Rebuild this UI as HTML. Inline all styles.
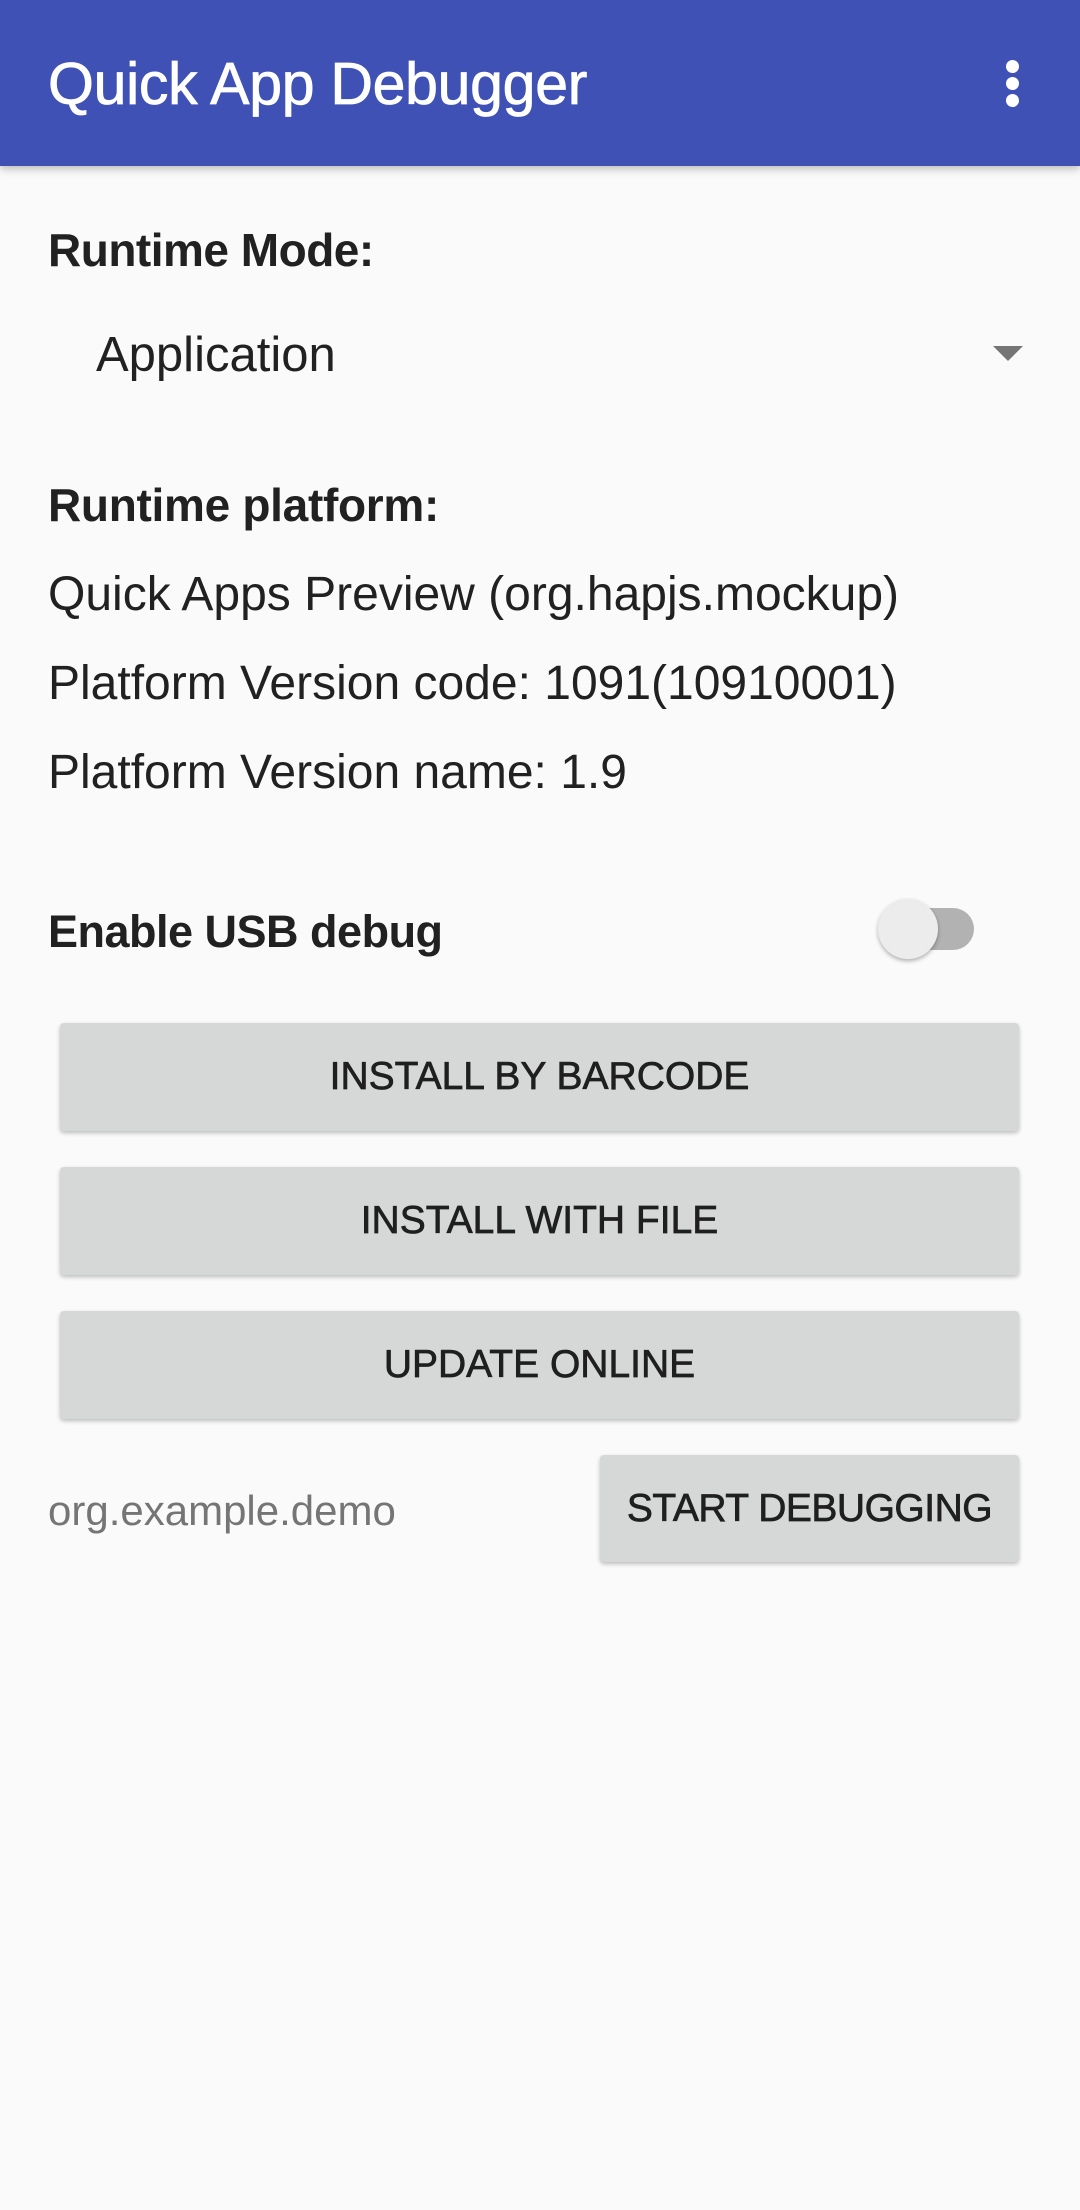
<!DOCTYPE html>
<html><head><meta charset="utf-8"><style>
body{margin:0;width:1080px;height:2210px;background:#fafafa;font-family:"Liberation Sans",sans-serif;position:relative;overflow:hidden;color:#212121}
.bar{position:absolute;left:0;top:0;width:1080px;height:166px;background:#3f51b5;box-shadow:0 3px 8px rgba(0,0,0,.25)}
.t{position:absolute;white-space:nowrap;line-height:1}
.btn{position:absolute;left:60px;width:959px;height:108px;background:#d6d7d7;border-radius:4px;box-shadow:0 2px 4px rgba(0,0,0,.25);display:flex;align-items:center;justify-content:center;font-size:39px;color:#1f1f1f;letter-spacing:0;-webkit-text-stroke:0.7px #1f1f1f}
.dot{position:absolute;left:1006px;width:13px;height:13px;border-radius:50%;background:#fff}
</style></head><body>
<div class="bar">
<div class="t" style="left:48px;top:55px;font-size:59px;color:#fff;letter-spacing:-0.3px;-webkit-text-stroke:0.8px #fff">Quick App Debugger</div>
<div class="dot" style="top:60px"></div><div class="dot" style="top:77px"></div><div class="dot" style="top:94px"></div>
</div>
<div class="t" style="left:48px;top:227px;font-size:46px;font-weight:bold;letter-spacing:-0.5px">Runtime Mode:</div>
<div class="t" style="left:96px;top:331px;font-size:49px">Application</div>
<svg style="position:absolute;left:993px;top:346px" width="30" height="15"><polygon points="0,0 30,0 15,15" fill="#757575"/></svg>
<div class="t" style="left:48px;top:482px;font-size:46px;font-weight:bold;letter-spacing:-0.3px">Runtime platform:</div>
<div class="t" style="left:48px;top:571px;font-size:48px">Quick Apps Preview (org.hapjs.mockup)</div>
<div class="t" style="left:48px;top:660px;font-size:48px">Platform Version code: 1091(10910001)</div>
<div class="t" style="left:48px;top:749px;font-size:48px">Platform Version name: 1.9</div>
<div class="t" style="left:48px;top:909px;font-size:45px;font-weight:bold;letter-spacing:-0.5px">Enable USB debug</div>
<div style="position:absolute;left:890px;top:908px;width:84px;height:42px;border-radius:21px;background:#b2b2b2"></div>
<div style="position:absolute;left:878px;top:899px;width:60px;height:60px;border-radius:50%;background:#ececec;box-shadow:0 2px 4px rgba(0,0,0,.3)"></div>
<div class="btn" style="top:1023px">INSTALL BY BARCODE</div>
<div class="btn" style="top:1167px">INSTALL WITH FILE</div>
<div class="btn" style="top:1311px">UPDATE ONLINE</div>
<div class="btn" style="top:1455px;left:600px;width:419px;height:107px;letter-spacing:-0.5px">START DEBUGGING</div>
<div class="t" style="left:48px;top:1490px;font-size:42px;color:#757575">org.example.demo</div>
</body></html>
